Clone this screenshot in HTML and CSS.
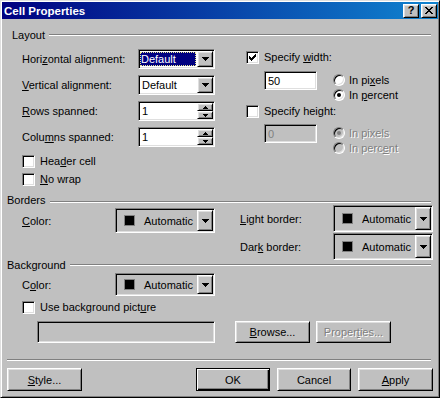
FILE: index.html
```html
<!DOCTYPE html>
<html lang="en">
<head>
    <meta charset="UTF-8">
    <title>Cell Properties</title>
    <link rel="stylesheet" href="styles.css">
</head>
<body>
    <div class="window">
        <div class="titlebar">
            <span class="title">Cell Properties</span>
            <div class="title-buttons">
                <span class="tbtn help">?</span>
                <span class="tbtn">
                    <svg width="8" height="7" viewBox="0 0 8 7"><path d="M0 0h2v1H0z M6 0h2v1H6z M1 1h2v1H1z M5 1h2v1H5z M2 2h4v1H2z M3 3h2v1H3z M2 4h4v1H2z M1 5h2v1H1z M5 5h2v1H5z M0 6h2v1H0z M6 6h2v1H6z" fill="#000"/></svg>
                </span>
            </div>
        </div>

        <div class="dialog">
            <!-- Layout -->
            <div class="group-title group-title--indent"><span>Layout</span><i class="etch"></i></div>
            <div class="layout-grid">
                <div class="layout-left">
                    <div class="fields">
                        <div class="field-row">
                            <span class="lbl lbl--wide">Hori<u>z</u>ontal alignment:</span>
                            <div class="select">
                                <span class="select-value selected">Default</span>
                                <span class="drop-btn"><svg width="7" height="4" viewBox="0 0 7 4"><path d="M0 0h7v1H0z M1 1h5v1H1z M2 2h3v1H2z M3 3h1v1H3z"/></svg></span>
                            </div>
                        </div>
                        <div class="field-row">
                            <span class="lbl lbl--wide"><u>V</u>ertical alignment:</span>
                            <div class="select">
                                <span class="select-value">Default</span>
                                <span class="drop-btn"><svg width="7" height="4" viewBox="0 0 7 4"><path d="M0 0h7v1H0z M1 1h5v1H1z M2 2h3v1H2z M3 3h1v1H3z"/></svg></span>
                            </div>
                        </div>
                        <div class="field-row">
                            <span class="lbl lbl--wide"><u>R</u>ows spanned:</span>
                            <div class="select">
                                <span class="select-value">1</span>
                                <span class="spin">
                                    <span class="spin-btn"><svg width="5" height="3" viewBox="0 0 5 3"><path d="M2 0h1v1H2z M1 1h3v1H1z M0 2h5v1H0z"/></svg></span>
                                    <span class="spin-btn"><svg width="5" height="3" viewBox="0 0 5 3"><path d="M0 0h5v1H0z M1 1h3v1H1z M2 2h1v1H2z"/></svg></span>
                                </span>
                            </div>
                        </div>
                        <div class="field-row">
                            <span class="lbl lbl--wide">Colu<u>m</u>ns spanned:</span>
                            <div class="select">
                                <span class="select-value">1</span>
                                <span class="spin">
                                    <span class="spin-btn"><svg width="5" height="3" viewBox="0 0 5 3"><path d="M2 0h1v1H2z M1 1h3v1H1z M0 2h5v1H0z"/></svg></span>
                                    <span class="spin-btn"><svg width="5" height="3" viewBox="0 0 5 3"><path d="M0 0h5v1H0z M1 1h3v1H1z M2 2h1v1H2z"/></svg></span>
                                </span>
                            </div>
                        </div>
                    </div>
                    <div class="checks">
                        <div class="check-row"><span class="check"></span><span>Hea<u>d</u>er cell</span></div>
                        <div class="check-row"><span class="check"></span><span><u>N</u>o wrap</span></div>
                    </div>
                </div>

                <div class="layout-right">
                    <div class="check-row">
                        <span class="check"><svg width="7" height="7" viewBox="0 0 7 7"><path d="M6 0h1v1H6z M5 1h2v1H5z M0 2h1v1H0z M4 2h3v1H4z M0 3h2v1H0z M3 3h3v1H3z M0 4h5v1H0z M1 5h3v1H1z M2 6h1v1H2z"/></svg></span>
                        <span>Specify <u>w</u>idth:</span>
                    </div>
                    <div class="sub">
                        <span class="text-field">50</span>
                        <div class="radios">
                            <div class="radio-row"><span class="radio"></span><span>In pi<u>x</u>els</span></div>
                            <div class="radio-row"><span class="radio radio--on"></span><span>In <u>p</u>ercent</span></div>
                        </div>
                    </div>
                    <div class="check-row">
                        <span class="check"></span>
                        <span>Specify height:</span>
                    </div>
                    <div class="sub sub--second">
                        <span class="text-field text-field--off">0</span>
                        <div class="radios radios--off">
                            <div class="radio-row"><span class="radio radio--on"></span><span class="off">In pixels</span></div>
                            <div class="radio-row"><span class="radio"></span><span class="off">In perc<u>e</u>nt</span></div>
                        </div>
                    </div>
                </div>
            </div>

            <!-- Borders -->
            <div class="group-title group-title--short group-title--borders"><span>Borders</span><i class="etch"></i></div>
            <div class="borders">
                <div class="borders-left">
                    <div class="field-row field-row--color">
                        <span class="lbl lbl--color"><u>C</u>olor:</span>
                        <div class="color-drop">
                            <span class="color-face"><i class="swatch"></i>Automatic</span>
                            <span class="drop-btn"><svg width="7" height="4" viewBox="0 0 7 4"><path d="M0 0h7v1H0z M1 1h5v1H1z M2 2h3v1H2z M3 3h1v1H3z"/></svg></span>
                        </div>
                    </div>
                </div>
                <div class="borders-right">
                    <div class="field-row field-row--tall">
                        <span class="lbl lbl--color"><u>L</u>ight border:</span>
                        <div class="color-drop">
                            <span class="color-face"><i class="swatch"></i>Automatic</span>
                            <span class="drop-btn"><svg width="7" height="4" viewBox="0 0 7 4"><path d="M0 0h7v1H0z M1 1h5v1H1z M2 2h3v1H2z M3 3h1v1H3z"/></svg></span>
                        </div>
                    </div>
                    <div class="field-row field-row--tall">
                        <span class="lbl lbl--color">Dar<u>k</u> border:</span>
                        <div class="color-drop">
                            <span class="color-face"><i class="swatch"></i>Automatic</span>
                            <span class="drop-btn"><svg width="7" height="4" viewBox="0 0 7 4"><path d="M0 0h7v1H0z M1 1h5v1H1z M2 2h3v1H2z M3 3h1v1H3z"/></svg></span>
                        </div>
                    </div>
                </div>
            </div>

            <!-- Background -->
            <div class="group-title group-title--short"><span>Background</span><i class="etch"></i></div>
            <div class="bg-color">
                <div class="field-row field-row--small">
                    <span class="lbl lbl--color">C<u>o</u>lor:</span>
                    <div class="color-drop">
                        <span class="color-face"><i class="swatch"></i>Automatic</span>
                        <span class="drop-btn"><svg width="7" height="4" viewBox="0 0 7 4"><path d="M0 0h7v1H0z M1 1h5v1H1z M2 2h3v1H2z M3 3h1v1H3z"/></svg></span>
                    </div>
                </div>
            </div>
            <div class="check-row bg-pic"><span class="check"></span><span>Use background pict<u>u</u>re</span></div>
            <div class="pic-row">
                <span class="pic-field"></span>
                <span class="btn btn--small"><span><u>B</u>rowse...</span></span>
                <span class="btn btn--small"><span class="off">Proper<u>t</u>ies...</span></span>
            </div>

            <div class="separator"></div>

            <div class="button-row">
                <span class="btn"><span><u>S</u>tyle...</span></span>
                <span class="spacer"></span>
                <span class="btn btn--default btn--narrow">OK</span>
                <span class="btn btn--narrow">Cancel</span>
                <span class="btn"><span><u>A</u>pply</span></span>
            </div>
        </div>
    </div>
</body>
</html>
```

FILE: styles.css
```css
html, body {
    margin: 0;
    padding: 0;
    background: #c0c0c0;
}

.window {
    width: 440px;
    height: 398px;
    box-sizing: border-box;
    border: 1px solid;
    border-color: #dfdfdf #000 #000 #dfdfdf;
    padding: 1px;
    background: #c0c0c0;
    box-shadow: inset 1px 1px #fff, inset -1px -1px #808080;
    font-family: "Liberation Sans", Arial, sans-serif;
    font-size: 11px;
    color: #000;
    overflow: hidden;
}

u {
    text-underline-offset: 1px;
}

/* title bar */
.titlebar {
    display: flex;
    align-items: center;
    justify-content: space-between;
    height: 17px;
    padding: 0 1px 0 2px;
    background: linear-gradient(to right, #000080, #1084d0);
}

.title {
    color: #fff;
    font-weight: bold;
    font-size: 11.5px;
}

.title-buttons {
    display: flex;
    gap: 2px;
}

.tbtn {
    width: 16px;
    height: 14px;
    box-sizing: border-box;
    display: flex;
    align-items: center;
    justify-content: center;
    background: #c0c0c0;
    border: 1px solid;
    border-color: #fff #000 #000 #fff;
    box-shadow: inset 1px 1px #dfdfdf, inset -1px -1px #808080;
    font-weight: bold;
    font-size: 11px;
    line-height: 1;
}

.dialog {
    padding: 9px 5px 0 5px;
}

/* group headings */
.group-title {
    display: flex;
    align-items: center;
    height: 14px;
    line-height: 14px;
}

.group-title span {
    padding-right: 4px;
}

.group-title--indent {
    padding-left: 5px;
}

.group-title--short {
    height: 10px;
    line-height: 10px;
}

.group-title--borders {
    margin-top: 7px;
}

.group-title--borders .etch {
    margin-top: 3px;
}

.etch {
    flex: 1;
    height: 0;
    border-top: 1px solid #808080;
    border-bottom: 1px solid #fff;
    margin-right: 2px;
}

/* layout group */
.layout-grid {
    display: flex;
}

.layout-left {
    width: 193px;
    padding: 7px 0 0 15px;
}

.fields {
    display: flex;
    flex-direction: column;
    gap: 6px;
}

.field-row {
    display: flex;
    align-items: center;
    height: 20px;
}

.lbl,
.select,
.color-drop,
.text-field,
.pic-field,
.btn {
    flex-shrink: 0;
}

.lbl--wide {
    width: 116px;
}

.lbl--color {
    width: 93px;
}

.select,
.text-field,
.color-drop,
.pic-field {
    box-sizing: border-box;
    border: 1px solid;
    border-color: #808080 #fff #fff #808080;
    box-shadow: inset 1px 1px #000, inset -1px -1px #dfdfdf;
}

.select {
    width: 77px;
    height: 20px;
    display: flex;
    padding: 1px;
    background: #fff;
}

.select-value {
    flex: 1;
    display: flex;
    align-items: center;
    padding-left: 2px;
}

.selected {
    margin: 1px 1px 1px 0;
    padding-left: 1px;
    background: #000080;
    color: #fff;
    outline: 1px dotted #e8e890;
    outline-offset: -1px;
}

.drop-btn,
.spin-btn,
.btn {
    box-sizing: border-box;
    background: #c0c0c0;
    border: 1px solid;
    border-color: #fff #000 #000 #fff;
    box-shadow: inset 1px 1px #dfdfdf, inset -1px -1px #808080;
}

.drop-btn {
    width: 16px;
    display: flex;
    align-items: center;
    justify-content: center;
}

.spin {
    width: 16px;
    display: flex;
    flex-direction: column;
}

.spin-btn {
    flex: 1;
    display: flex;
    align-items: center;
    justify-content: center;
}

.checks {
    margin-top: 5px;
}

.check-row {
    display: flex;
    align-items: center;
    gap: 5px;
    height: 18px;
}

.check {
    width: 13px;
    height: 13px;
    box-sizing: border-box;
    display: flex;
    align-items: center;
    justify-content: center;
    background: #fff;
    border: 1px solid;
    border-color: #808080 #fff #fff #808080;
    box-shadow: inset 1px 1px #000, inset -1px -1px #dfdfdf;
}

.layout-right {
    flex: 1;
    margin-left: 31px;
    padding-top: 6px;
}

.sub {
    display: flex;
    padding-left: 18px;
    margin-top: 5px;
}

.sub--second {
    margin-top: 4px;
}

.text-field {
    width: 53px;
    height: 19px;
    display: flex;
    align-items: center;
    padding-left: 3px;
    background: #fff;
}

.text-field--off {
    background: #c0c0c0;
    color: #808080;
}

.radios {
    margin-left: 16px;
    padding-top: 1px;
}

.radio-row {
    display: flex;
    align-items: center;
    gap: 4px;
    height: 15px;
}

.radio {
    width: 12px;
    height: 12px;
    box-sizing: border-box;
    border-radius: 50%;
    border: 1px solid;
    border-color: #808080 #fff #fff #808080;
    box-shadow: inset 1px 1px #000, inset -1px -1px #dfdfdf;
    background: #fff;
    display: flex;
    align-items: center;
    justify-content: center;
}

.radio--on::after {
    content: "";
    width: 4px;
    height: 4px;
    border-radius: 50%;
    background: #000;
}

.radios--off .radio {
    background: #c0c0c0;
}

.radios--off .radio--on::after {
    background: #808080;
}

.off {
    color: #808080;
    text-shadow: 1px 1px 0 #fff;
}

/* borders group */
.borders {
    display: flex;
    height: 55px;
}

.borders-left {
    width: 193px;
    padding: 3px 0 0 15px;
}

.field-row--color {
    height: 25px;
}

.color-drop {
    width: 100px;
    height: 100%;
    display: flex;
    padding: 1px;
    background: #c0c0c0;
}

.color-face {
    flex: 1;
    display: flex;
    align-items: center;
    gap: 9px;
    padding-left: 7px;
}

.swatch {
    width: 11px;
    height: 11px;
    box-sizing: border-box;
    background: #000;
    border: 1px solid #808080;
}

.borders-right {
    margin-left: 25px;
    display: flex;
    flex-direction: column;
    gap: 1px;
}

.field-row--tall {
    height: 27px;
}

/* background group */
.bg-color {
    margin-top: 3px;
    padding-left: 15px;
}

.field-row--small {
    height: 23px;
}

.bg-pic {
    margin-top: 2px;
    padding-left: 15px;
}

.pic-row {
    display: flex;
    gap: 6px;
    margin-top: 5px;
    padding-left: 30px;
}

.pic-field {
    width: 178px;
    height: 22px;
    margin-right: 14px;
    background: #c0c0c0;
}

.btn {
    width: 75px;
    height: 23px;
    display: flex;
    align-items: center;
    justify-content: center;
}

.btn--small {
    height: 22px;
}

.btn--narrow {
    width: 74px;
}

.btn--default {
    border-color: #000;
    box-shadow: inset 1px 1px #fff, inset -1px -1px #000, inset -2px -2px #808080;
}

.separator {
    margin: 16px 2px 0 0;
    border-top: 1px solid #808080;
    border-bottom: 1px solid #fff;
}

.button-row {
    display: flex;
    gap: 7px;
    margin-top: 7px;
}

.spacer {
    flex: 1;
}
```
